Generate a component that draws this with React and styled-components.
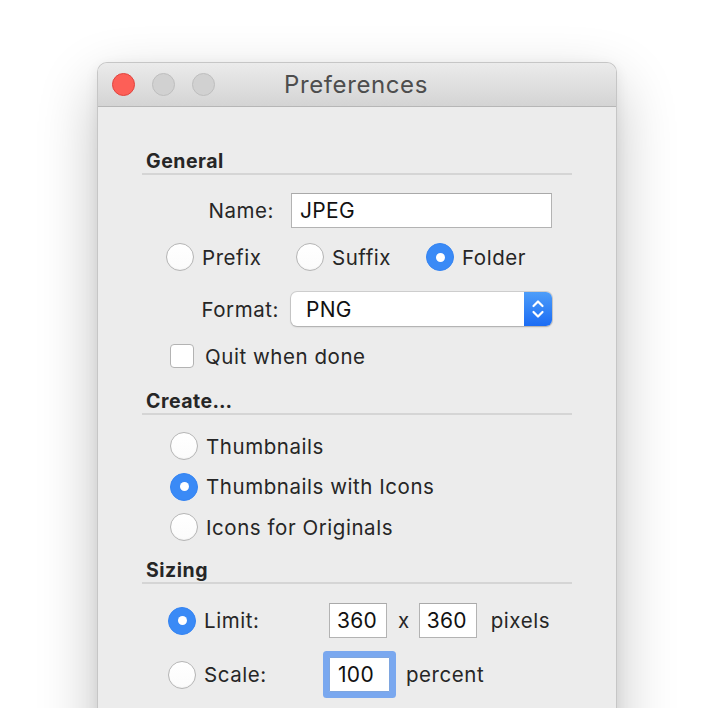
import React from 'react'
import styled, { createGlobalStyle } from 'styled-components'

const GlobalStyle = createGlobalStyle`
  html, body {
    margin: 0;
    padding: 0;
    background: #ffffff;
    overflow: hidden;
  }
  body {
    font-family: Inter, "Noto Sans", "Liberation Sans", sans-serif;
    color: #262626;
  }
`

const Page = styled.div`
  height: 708px;
  padding: 62px 0 0 97px;
  box-sizing: border-box;
`

const Window = styled.div`
  width: 520px;
  height: 700px;
  box-sizing: border-box;
  background: #ececec;
  border: 1px solid #c6c6c6;
  border-bottom: none;
  border-radius: 10px 10px 0 0;
  box-shadow: 0 24px 60px rgba(0, 0, 0, 0.24), 0 4px 14px rgba(0, 0, 0, 0.07);
  display: flex;
  flex-direction: column;
`

const TitleBar = styled.div`
  height: 44px;
  flex-shrink: 0;
  box-sizing: border-box;
  border-radius: 9px 9px 0 0;
  background: linear-gradient(#ebebeb, #d4d4d4);
  border-bottom: 1px solid #b6b6b6;
  display: flex;
  align-items: center;
  padding-left: 14px;
`

const Lights = styled.div`
  display: flex;
  gap: 17px;
`

const Light = styled.span`
  width: 23px;
  height: 23px;
  box-sizing: border-box;
  border-radius: 50%;
  background: ${p => (p.$close ? '#fd5f57' : '#d1d1d1')};
  border: 1px solid ${p => (p.$close ? '#e0443e' : '#bebebe')};
`

const Title = styled.div`
  flex: 1;
  text-align: center;
  margin-right: 119px;
  font-size: 24px;
  color: #4d4d4d;
  letter-spacing: 0.6px;
`

const Body = styled.div`
  padding: 42px 44px 0 44px;
  display: flex;
  flex-direction: column;
  font-size: 20.5px;
  letter-spacing: 0.55px;
`

const Heading = styled.div`
  height: 24px;
  line-height: 24px;
  padding-left: 4px;
  font-size: 19.5px;
  font-weight: 700;
  letter-spacing: 0.5px;
  color: #262626;
  border-bottom: 2px solid #d5d5d5;
  margin-top: ${p => p.$top || 0}px;
`

const FieldRow = styled.div`
  display: flex;
  align-items: center;
  margin-top: ${p => p.$top}px;
`

const FieldLabel = styled.div`
  width: 149px;
  box-sizing: border-box;
  text-align: right;
  padding-right: ${p => p.$inset}px;
`

const TextInput = styled.div`
  width: ${p => p.$w}px;
  height: 35px;
  box-sizing: border-box;
  background: #fff;
  border: 1px solid #b3b3b3;
  border-top-color: #a9a9a9;
  display: flex;
  align-items: center;
  padding-left: ${p => p.$pad || 8}px;
  font-size: 21px;
  letter-spacing: 0.3px;
  color: #111;
  flex-shrink: 0;
`

const FocusedInput = styled(TextInput)`
  border-color: #7ea6e0;
  box-shadow: 0 0 0 6px #7aa8ef;
  border-radius: 1px;
`

const Select = styled.div`
  width: 261px;
  height: 34px;
  box-sizing: border-box;
  display: flex;
  background: #fff;
  border-radius: 6px;
  box-shadow: 0 0 0 1px rgba(0, 0, 0, 0.12), 0 1px 2px rgba(0, 0, 0, 0.18);
  overflow: hidden;
`

const SelectValue = styled.div`
  flex: 1;
  display: flex;
  align-items: center;
  padding-left: 15px;
  font-size: 21px;
  letter-spacing: 0.3px;
  color: #111;
`

const Stepper = styled.div`
  width: 28px;
  background: linear-gradient(#4d9df9, #1b6cf4);
  display: flex;
  align-items: center;
  justify-content: center;
`

const RadioRow = styled.div`
  display: flex;
  align-items: center;
  margin-top: ${p => p.$top}px;
  padding-left: ${p => p.$indent}px;
`

const RadioColumn = styled.div`
  display: flex;
  flex-direction: column;
  gap: 12.5px;
  margin-top: 17px;
  padding-left: 28px;
`

const Option = styled.label`
  display: flex;
  align-items: center;
  gap: ${p => p.$gap || 8}px;
  width: ${p => (p.$w ? `${p.$w}px` : 'auto')};
  height: 28px;
  flex-shrink: 0;
`

const RadioDot = styled.span`
  width: 28px;
  height: 28px;
  flex-shrink: 0;
  box-sizing: border-box;
  border-radius: 50%;
  display: flex;
  align-items: center;
  justify-content: center;
  background: ${p => (p.$on ? '#3a8af6' : 'linear-gradient(#ffffff, #fbfbfb)')};
  border: 1px solid ${p => (p.$on ? '#3584f2' : '#b5b5b5')};
  box-shadow: ${p => (p.$on ? 'none' : 'inset 0 -1px 1px rgba(0,0,0,0.04)')};

  &::after {
    content: '';
    display: ${p => (p.$on ? 'block' : 'none')};
    width: 9px;
    height: 9px;
    border-radius: 50%;
    background: #fff;
  }
`

const CheckRow = styled.label`
  display: flex;
  align-items: center;
  gap: 11px;
  height: 24px;
  margin-top: 18px;
  padding-left: 28px;
`

const CheckBox = styled.span`
  width: 24px;
  height: 24px;
  box-sizing: border-box;
  border-radius: 4px;
  background: #fff;
  border: 1px solid #b3b3b3;
`

const SizeRows = styled.div`
  display: flex;
  flex-direction: column;
  gap: 19px;
  margin-top: 19px;
  padding-left: 26px;
`

const SizeRow = styled.div`
  display: flex;
  align-items: center;
  height: 35px;
  line-height: 37px;
`

const Unit = styled.span`
  margin: 0 ${p => p.$r || 0}px 0 ${p => p.$l}px;
`

const Radio = ({ on, label, w, gap }) => (
  <Option $w={w} $gap={gap}>
    <RadioDot $on={on} />
    {label}
  </Option>
)

const Chevrons = () => (
  <svg width="14" height="22" viewBox="0 0 14 22" fill="none" stroke="#fff" strokeWidth="2.2" strokeLinecap="round" strokeLinejoin="round">
    <path d="M2.5 8 L7 3.5 L11.5 8" />
    <path d="M2.5 14 L7 18.5 L11.5 14" />
  </svg>
)

export default function App() {
  return (
    <Page>
      <GlobalStyle />
      <Window>
        <TitleBar>
          <Lights>
            <Light $close />
            <Light />
            <Light />
          </Lights>
          <Title>Preferences</Title>
        </TitleBar>
        <Body>
          <Heading>General</Heading>

          <FieldRow $top={18}>
            <FieldLabel $inset={17}>Name:</FieldLabel>
            <TextInput $w={261}>JPEG</TextInput>
          </FieldRow>

          <RadioRow $top={15} $indent={24}>
            <Radio label="Prefix" w={130} />
            <Radio label="Suffix" w={130} />
            <Radio label="Folder" on />
          </RadioRow>

          <FieldRow $top={21}>
            <FieldLabel $inset={12}>Format:</FieldLabel>
            <Select>
              <SelectValue>PNG</SelectValue>
              <Stepper>
                <Chevrons />
              </Stepper>
            </Select>
          </FieldRow>

          <CheckRow>
            <CheckBox />
            Quit when done
          </CheckRow>

          <Heading $top={21}>Create…</Heading>
          <RadioColumn>
            <Radio label="Thumbnails" />
            <Radio label="Thumbnails with Icons" on />
            <Radio label="Icons for Originals" />
          </RadioColumn>

          <Heading $top={17}>Sizing</Heading>
          <SizeRows>
            <SizeRow>
              <Radio label="Limit:" on w={161} />
              <TextInput $w={58} $pad={7}>360</TextInput>
              <Unit $l={11} $r={9}>x</Unit>
              <TextInput $w={58} $pad={7}>360</TextInput>
              <Unit $l={14}>pixels</Unit>
            </SizeRow>
            <SizeRow>
              <Radio label="Scale:" w={161} />
              <FocusedInput $w={61} $pad={8}>100</FocusedInput>
              <Unit $l={16}>percent</Unit>
            </SizeRow>
          </SizeRows>
        </Body>
      </Window>
    </Page>
  )
}
